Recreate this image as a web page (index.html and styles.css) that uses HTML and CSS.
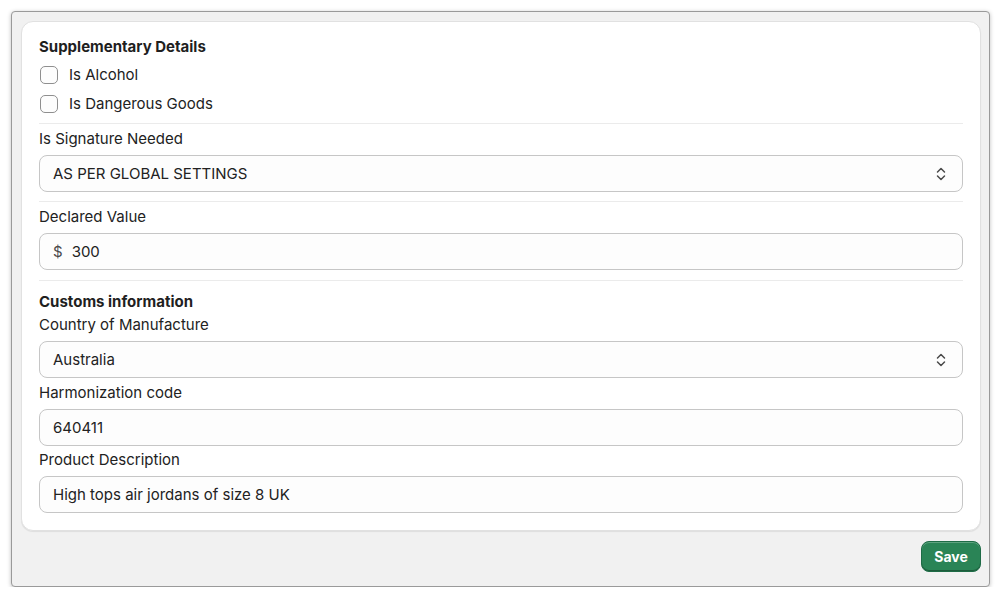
FILE: index.html
```html
<!DOCTYPE html>
<html>
<head>
<meta charset="utf-8">
<link rel="stylesheet" href="styles.css">
</head>
<body>
<div class="frame">
  <div class="card">
    <div class="section">
      <h2 class="heading">Supplementary Details</h2>
      <label class="check-row"><span class="checkbox"></span><span>Is Alcohol</span></label>
      <label class="check-row"><span class="checkbox"></span><span>Is Dangerous Goods</span></label>
    </div>
    <div class="divider"></div>
    <div class="field">
      <div class="label">Is Signature Needed</div>
      <div class="control select">
        <span class="value">AS PER GLOBAL SETTINGS</span>
        <svg class="chev" width="12" height="16" viewBox="0 0 12 16"><path d="M2.5 6 6 2.5 9.5 6M2.5 10 6 13.5 9.5 10" fill="none" stroke="#4a4a4a" stroke-width="1.5" stroke-linecap="round" stroke-linejoin="round"/></svg>
      </div>
    </div>
    <div class="divider"></div>
    <div class="field">
      <div class="label">Declared Value</div>
      <div class="control"><span class="prefix">$</span><span class="value">300</span></div>
    </div>
    <div class="divider"></div>
    <div class="section customs">
      <h2 class="heading">Customs information</h2>
      <div class="field tight">
        <div class="label">Country of Manufacture</div>
        <div class="control select">
          <span class="value">Australia</span>
          <svg class="chev" width="12" height="16" viewBox="0 0 12 16"><path d="M2.5 6 6 2.5 9.5 6M2.5 10 6 13.5 9.5 10" fill="none" stroke="#4a4a4a" stroke-width="1.5" stroke-linecap="round" stroke-linejoin="round"/></svg>
        </div>
      </div>
      <div class="field tight">
        <div class="label">Harmonization code</div>
        <div class="control"><span class="value">640411</span></div>
      </div>
      <div class="field tight">
        <div class="label">Product Description</div>
        <div class="control"><span class="value">High tops air jordans of size 8 UK</span></div>
      </div>
    </div>
  </div>
  <div class="actions">
    <button class="save">Save</button>
  </div>
</div>
</body>
</html>
```
FILE: styles.css
```css
* { box-sizing: border-box; }
html, body { margin: 0; padding: 0; background: #ffffff; }
body {
  font-family: Inter, "Noto Sans", sans-serif;
  color: #222222;
  font-size: 15px;
  line-height: 20px;
}
.frame {
  margin: 11px 10px 0 11px;
  height: 576px;
  background: #f1f1f1;
  border: 1px solid #9a9a9a;
  border-radius: 4px;
  box-shadow: 0 1px 4px rgba(0,0,0,0.25);
  padding: 9px 8px 0 9px;
}
.card {
  background: #ffffff;
  border: 1px solid #e1e1e1;
  border-radius: 12px;
  box-shadow: 0 1px 1px rgba(0,0,0,0.08);
  padding: 15px 17px 17px 17px;
  height: 510px;
}
.heading {
  margin: 0;
  font-size: 15px;
  font-weight: 700;
  line-height: 20px;
  color: #1f1f1f;
}
.section { display: flex; flex-direction: column; }
.check-row {
  display: flex;
  align-items: center;
  gap: 11px;
  height: 20px;
  margin-top: 8px;
}
.check-row + .check-row { margin-top: 9px; }
.checkbox {
  width: 18px;
  height: 18px;
  border: 1px solid #8f8f8f;
  border-radius: 5px;
  background: #fdfdfd;
  margin-left: 1px;
}
.divider {
  height: 1px;
  background: #ebebeb;
  margin: 9px 0 5px;
}
.field { display: flex; flex-direction: column; gap: 6px; }
.field + .divider { margin-top: 9px; }
.field + .divider + .field + .divider { margin-top: 10px; }
.label { height: 20px; }
.control {
  height: 37px;
  border: 1px solid #c6c6c6;
  border-radius: 8px;
  background: #fdfdfd;
  display: flex;
  align-items: center;
  padding: 0 13px;
}
.prefix { color: #4a4a4a; margin-right: 9px; }
.select .value { flex: 1; }
.chev { display: block; margin-right: 2px; }
.customs { margin-top: 11px; }
.customs .heading { margin-bottom: 3px; }
.field.tight + .field.tight { margin-top: 5px; }
.field.tight + .field.tight:last-child { margin-top: 4px; }
.actions {
  display: flex;
  justify-content: flex-end;
  padding-top: 10px;
}
.save {
  width: 60px;
  height: 31px;
  border: 1px solid #1e6b46;
  border-radius: 8px;
  background: #2a8456;
  color: #ffffff;
  font-family: Inter, "Noto Sans", sans-serif;
  font-size: 14px;
  font-weight: 700;
  padding: 0;
  box-shadow: inset 0 -1px 0 rgba(0,0,0,0.3), inset 0 1px 0 rgba(255,255,255,0.25);
}
```
